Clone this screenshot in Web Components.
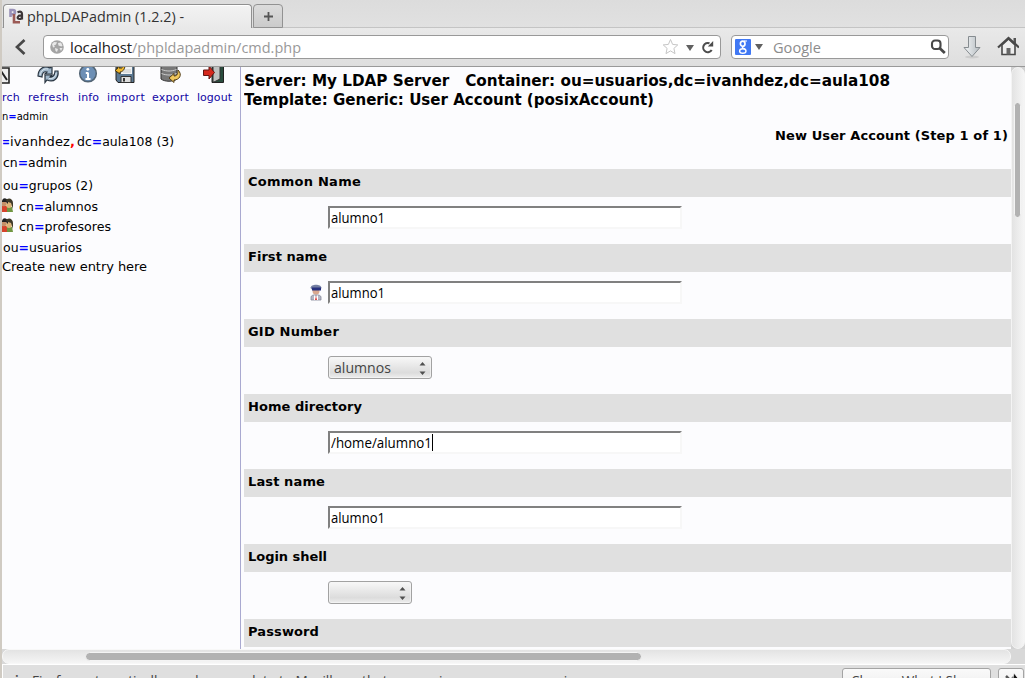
<!DOCTYPE html>
<html lang="en"><head><meta charset="utf-8"><title>phpLDAPadmin (1.2.2) -</title>
<style>html,body{margin:0;height:100%;overflow:hidden;background:#dfdfdf}</style></head>
<body><browser-window></browser-window>
<script>
const define=(name,html,init)=>customElements.define(name,class extends HTMLElement{
  connectedCallback(){
    if(this.shadowRoot)return;
    const t=document.createElement('template');
    t.innerHTML=typeof html==='function'?html(this):html;
    this.attachShadow({mode:'open'}).append(t.content.cloneNode(true));
    if(init)init(this);
  }
});

// Text that fills an exact width: condensed when too wide (or when "stretch" is set), tracked otherwise
define('fit-text','<style>:host{display:inline-block;white-space:pre;flex:none}span{display:inline-block;transform-origin:0 50%}</style><span><slot></slot></span>',el=>{
  const s=el.shadowRoot.querySelector('span'),w=+el.getAttribute('w'),n=s.getBoundingClientRect().width;
  el.style.width=w+'px';
  if(n>w*1.015||el.hasAttribute('stretch'))s.style.transform=`scaleX(${w/n})`;
  else s.style.letterSpacing=(w-n)/el.textContent.length+'px';
});

define('tab-strip',`<style>
:host{display:flex;height:28px;box-sizing:border-box;padding:4px 0 0 1px;background:linear-gradient(#dcdcdc,#e1e1e1);box-shadow:inset 0 -1px #c4c4c4}
.tab{display:flex;align-items:center;width:249px;height:24px;box-sizing:border-box;border:1px solid #909090;border-bottom:0;border-radius:4px 4px 0 0;background:linear-gradient(#f3f3f3,#e9e9e9);padding:0 0 1px 5px;box-shadow:inset 0 1px #fff;font:15px "Open Sans",sans-serif;color:#333}
.tab svg{margin-right:3px}
.new{width:30px;height:24px;margin-left:1px;box-sizing:border-box;border:1px solid #929292;border-radius:4px 4px 0 0;background:linear-gradient(#dcdcdc,#cbcbcb);display:flex;justify-content:center;padding-top:7px}
.new svg{display:block}
</style>
<div class="tab"><svg width="15" height="16" viewBox="0 0 15 16" fill="none" stroke-width="2.2">
<path d="M1.500 9V2h2.300c3 0 3 4.200 0 4.200H2" stroke="#9a92b8" stroke-width="2.600"/><path d="M5 6v8.200h6" stroke="#9b5a55" stroke-width="2.600"/><path d="M8.500 4.200c4-1.500 4.500.3 4.500 2.300v5M13 7.500c-5-.5-5.500 3.500-2.500 3.500 1.500 0 2.500-1 2.500-2" stroke="#3c3638"/></svg>
<fit-text w="157">phpLDAPadmin (1.2.2) -</fit-text></div>
<div class="new"><svg width="9" height="9" viewBox="0 0 9 9"><path d="M4.500 0v9M0 4.500h9" stroke="#555" stroke-width="1.800"/></svg></div>`);

define('nav-bar',`<style>
:host{display:flex;align-items:center;height:39px;box-sizing:border-box;padding:0 6px 1px 12px;border-bottom:1px solid #999;background:linear-gradient(#e9e9e9,#dedede);font:15px "Open Sans",sans-serif}
svg{display:block;flex:none}
.field{display:flex;align-items:center;box-sizing:border-box;height:24px;border:1px solid #999;border-radius:4px;background:#fff}
.url{width:678px;margin-left:17px;padding:0 6px}
.search{width:218px;margin-left:10px;padding:0 3px;color:#8c8c8c}
.host{color:#222;margin-left:6px}.path{color:#999}
.grow{flex:1}
</style>
<svg width="12" height="18" viewBox="0 0 12 18"><path d="M10.500 2 3 9l7.500 7" fill="none" stroke="#484848" stroke-width="2.700"/></svg>
<div class="field url">
<svg width="14" height="14" viewBox="0 0 14 14"><circle cx="7" cy="7" r="6.800" fill="#a4a4a4"/><path d="M2 4l2-2 3 .3-1 2.200-2 1 1 1.500-2 .5zM8 3l3-.5 1.500 3-1 1-3-1zM5 8l3 1-1 3-1.500-1zM9.500 8l3 0-1.500 3z" fill="#e8e8e8"/></svg>
<fit-text class="host" w="62">localhost</fit-text><fit-text class="path" w="169">/phpldapadmin/cmd.php</fit-text>
<span class="grow"></span>
<svg width="17" height="17" viewBox="0 0 17 17"><path d="M8.500 1.500l2.100 4.900 5.200.5-3.900 3.500 1.100 5.200-4.500-2.700L4 15.600l1.100-5.200L1.200 6.900l5.200-.5z" fill="#fff" stroke="#c6c6c6"/></svg>
<svg width="8" height="6" viewBox="0 0 8 6" style="margin:2px 7px 0 7px"><path d="M0 0h8L4 6z" fill="#606060"/></svg>
<svg width="13" height="14" viewBox="0 0 13 14"><path d="M8.500 3.300A4.600 4.600 0 1 0 10.700 10" fill="none" stroke="#4c4c4c" stroke-width="2.100"/><path d="M6.800 6.500h5.400V1z" fill="#4c4c4c"/></svg>
</div>
<div class="field search">
<svg width="16" height="16" viewBox="0 0 16 16"><rect width="16" height="16" rx="1" fill="#4078f4"/><g fill="none" stroke="#fff"><ellipse cx="7.700" cy="4.700" rx="2.300" ry="2.600" stroke-width="1.700"/><ellipse cx="7.800" cy="12" rx="3.200" ry="2.300" stroke-width="1.400"/><path d="M9 2h3M8 7.500c-2 1.500 1 1.500 2 2.500" stroke-width="1.200"/></g></svg>
<svg width="8" height="6" viewBox="0 0 8 6" style="margin:1px 10px 0 4px"><path d="M0 0h8L4 6z" fill="#606060"/></svg>
<fit-text w="48">Google</fit-text><span class="grow"></span>
<svg width="16" height="16" viewBox="0 0 16 16" style="margin-right:-1px"><rect x="2" y="1.500" width="8.500" height="8.500" rx="3" fill="none" stroke="#484848" stroke-width="2.100"/><path d="M9.500 9l5.300 5" stroke="#484848" stroke-width="2.800"/></svg>
</div>
<svg width="20" height="24" viewBox="0 0 20 24" style="margin-left:13px"><defs><linearGradient id="g" x2="1"><stop stop-color="#f5f7f8"/><stop offset="1" stop-color="#b4bbc0"/></linearGradient></defs><ellipse cx="10" cy="22" rx="7" ry="1.500" fill="#ccc"/><path d="M6.500 1.500h7v11h4.500L10 21.500 2 12.500h4.500z" fill="url(#g)" stroke="#868c90"/></svg>
<span class="grow"></span>
<svg width="22" height="22" viewBox="0 0 22 22" style="margin-top:-1px"><path d="M16.500 3h2.500v5h-2.500z" fill="#555"/><path d="M5 10v9.500h13V10L11.500 4z" fill="#ededed" stroke="#484848" stroke-width="1.600"/><path d="M1 12.500 11.500 3 22 12.500" fill="none" stroke="#484848" stroke-width="2.200"/><path d="M9.500 13h4v6.500h-4z" fill="#666"/></svg>`);

const art={
search:'<path d="M-8 1H9v15H-8z" fill="#eee" stroke="#222" stroke-width="1.600"/><path d="M1 4l6 9M1 5v5" stroke="#222" stroke-width="2"/>',
refresh:'<path d="M0 9C0 2 6-2 12 1l2-2v8H7l2-2C6 4 4 6 4 10z" fill="#9fb6ca" stroke="#283440" stroke-width="1.200"/><path d="M20 4c1 7-4 12-11 9l-2 2.500V8h7l-2 2c3 .5 5-2 5-6z" fill="#9fb6ca" stroke="#283440" stroke-width="1.200"/><path d="M2 8C3 4 6 1 10 2M18 6c0 4-3 6-7 5.500" fill="none" stroke="#dbe6ee"/>',
info:'<circle cx="10" cy="6.500" r="8.300" fill="#6d8fb5" stroke="#526474" stroke-width="1.500"/><path d="M10 5.500V12M7.800 6H10M7.500 12h5" stroke="#fff" stroke-width="2"/><circle cx="9.800" cy="2.300" r="1.400" fill="#fff"/>',
import:'<path d="M1-2h18v17.500H3l-2-2.500z" fill="#5b7892" stroke="#222"/><path d="M6-2h11v9H6z" fill="#f2f3f3"/><path d="M8 3h8M8 5h8" stroke="#b5b5b5" stroke-width=".7"/><path d="M6 9.500h10v6H6z" fill="#ddd" stroke="#333"/><path d="M9 11v3.500" stroke="#333" stroke-width="2"/><path d="M0-2h4v3h3v-3h3c0 5-3 7-5 7v2L0 3.500 3 1z" fill="#eeb62d" stroke="#433512"/>',
export:'<path d="M1-2h16v14c-4 3-12 3-16 0z" fill="#777" stroke="#333"/><path d="M1.500 2.500c5 2 10 2 15 0M1.500 6.500c5 2 10 2 15 0" fill="none" stroke="#ccc" stroke-width="1"/><path d="M18 3c5 5 1 10-4 10v2.500L9 11l5-4.500V9c3 0 4-2 4-6z" fill="#f0c75c" stroke="#543f19"/>',
logout:'<path d="M8-2h11.500v17.500H8z" fill="#294c3d" stroke="#222"/><path d="M9-2h7v14l-6 3H9z" fill="#bfc1c0" stroke="#333"/><path d="M-.5 3H5V-1l5.500 6.500L5 12V8.500H-.5z" fill="#d5281d" stroke="#621613"/>'};
define('tool-item',el=>`<style>:host{display:flex;flex-direction:column;align-items:center;flex:none;color:#1206a4;font:11px/14px "DejaVu Sans",sans-serif;width:${el.getAttribute('w')}px}svg{display:block;flex:none;margin-bottom:8px;overflow:visible}</style>
<svg width="22" height="16" viewBox="0 0 22 16">${art[el.getAttribute('icon')]}</svg><fit-text w="${el.getAttribute('w')}">${el.textContent}</fit-text>`);

define('group-icon',`<style>:host{display:block;width:17px;height:14px;flex:none}svg{display:block;margin-top:-1px}</style><svg width="12" height="14" viewBox="0 0 12 14"><path d="M0 8h6v6H0z" fill="#d4432c"/><path d="M5 9h5l1 5H5z" fill="#719642"/><circle cx="2" cy="5.500" r="2.800" fill="#c49068"/><circle cx="7" cy="7" r="2.900" fill="#dcb478"/><path d="M0 3c1-4 5-3 6 0v3l-2-2H0z" fill="#222"/><path d="M4 3c1-4 7-3 7 2v6l-2-6-3-1z" fill="#3f3a28"/></svg>`);

define('ldap-tree',`<style>
:host{display:block;width:238px;flex:none;overflow:hidden;border-right:1px solid #a9a9d0;font:13px "DejaVu Sans",sans-serif;color:#000}
.tools{display:flex;gap:8px;height:38px}
.tools :nth-child(3),.tools :nth-child(4){position:relative;left:1px}
.who{font-size:11px;line-height:16px;height:16px;padding-top:4px;margin-bottom:6px}
.rows{display:grid;grid-template-rows:20px 23px 22px 20px 20px 22px 17px}
.rows>div{display:flex;align-items:center;padding-left:1px}.rows>.flush{padding-left:0}
b{color:#00f;font-weight:bold}i{color:#f00;font-style:normal;font-weight:bold}
</style>
<div class="tools"><tool-item icon="search" w="18">rch</tool-item><tool-item icon="refresh" w="41">refresh</tool-item><tool-item icon="info" w="21">info</tool-item><tool-item icon="import" w="38">import</tool-item><tool-item icon="export" w="37">export</tool-item><tool-item icon="logout" w="35">logout</tool-item></div>
<div class="who"><fit-text w="46">n<b>=</b>admin</fit-text></div>
<div class="rows">
<div class="flush"><fit-text w="8"><b>=</b></fit-text><fit-text w="60">ivanhdez</fit-text><fit-text w="7"><i>,</i></fit-text><fit-text w="97">dc<b>=</b>aula108 (3)</fit-text></div>
<div><fit-text w="64">cn<b>=</b>admin</fit-text></div>
<div><fit-text w="90">ou<b>=</b>grupos (2)</fit-text></div>
<div class="flush"><group-icon></group-icon><fit-text w="79">cn<b>=</b>alumnos</fit-text></div>
<div class="flush"><group-icon></group-icon><fit-text w="92">cn<b>=</b>profesores</fit-text></div>
<div><fit-text w="79">ou<b>=</b>usuarios</fit-text></div>
<div class="flush"><fit-text w="145">Create new entry here</fit-text></div>
</div>`);

define('form-field',el=>`<style>
:host{display:block;height:75px;flex:none}
.head{height:28px;box-sizing:border-box;background:#e0e0e0;padding-left:4px;font:bold 13px/25px "DejaVu Sans",sans-serif}
.body{display:grid;grid-template-columns:84px 1fr;padding-top:9px}
.icon{display:flex;justify-content:flex-end;padding:3px 6px 0 0}
</style><div class="head"><fit-text w="${el.getAttribute('w')}">${el.getAttribute('label')}</fit-text></div>
<div class="body"><div class="icon"><slot name="icon"></slot></div><slot></slot></div>`);

define('text-field',`<style>
:host{display:flex;align-items:center;width:354px;height:23px;box-sizing:border-box;border:2px solid;border-color:#808080 #f7f7f7 #f7f7f7 #808080;background:#fff;padding-left:1px;font:15px/19px "Open Sans",sans-serif;color:#000}
:host([caret])::after{content:"";width:1px;height:17px;background:#000}
</style><slot></slot>`);

define('select-box',`<style>
:host{display:flex;align-items:center;justify-content:space-between;height:23px;box-sizing:border-box;border:1px solid #a2a2a2;border-radius:3px;background:linear-gradient(#f8f8f8,#e9e9e9 40%,#dcdcdc 75%,#eee);padding:0 5px;font:15px/19px "Open Sans",sans-serif;color:#444;box-shadow:inset 0 0 0 1px #f6f6f6aa}
svg{margin-top:2px}
</style><span><slot></slot></span><svg width="7" height="13" viewBox="0 0 7 13"><path d="M.5 3.500 3.500 0l3 3.500zM.5 9.500l3 3.500 3-3.500z" fill="#505050"/></svg>`);

define('person-icon',`<style>:host,svg{display:block}</style><svg width="12" height="17" viewBox="0 0 12 17"><path d="M1 16v-3c0-3 10-3 10 0v3z" fill="#b4b7c6" stroke="#858899" stroke-width=".8"/><path d="M4 11l2 2 2-2 0 5H4z" fill="#fff"/><path d="M6 12l1 4H5z" fill="#d93636"/><circle cx="6" cy="7" r="3.500" fill="#d9a890"/><path d="M.5 4c0-4.500 11-4.500 11 0l-1 1.500H2z" fill="#747fa2"/><path d="M2 3.500h9v3H2z" fill="#27317f"/></svg>`);

define('entry-form',`<style>
:host{display:flex;flex-direction:column;flex:1;min-width:0;overflow:hidden;padding:4px 0 0 3px;color:#000}
h1{margin:0;font:bold 16px/19px "DejaVu Sans",sans-serif;height:19px;white-space:nowrap}
.step{font:bold 13px/20px "DejaVu Sans",sans-serif;text-align:right;padding:17px 3px 23px 0;height:20px}
select-box.a{width:104px}select-box.b{width:84px}
</style>
<h1><fit-text stretch w="646">Server: My LDAP Server &nbsp; Container: ou=usuarios,dc=ivanhdez,dc=aula108</fit-text></h1>
<h1><fit-text stretch w="410">Template: Generic: User Account (posixAccount)</fit-text></h1>
<div class="step"><fit-text w="233">New User Account (Step 1 of 1)</fit-text></div>
<form-field label="Common Name" w="113"><text-field><fit-text w="54">alumno1</fit-text></text-field></form-field>
<form-field label="First name" w="79"><person-icon slot="icon"></person-icon><text-field><fit-text w="54">alumno1</fit-text></text-field></form-field>
<form-field label="GID Number" w="91"><select-box class="a"><fit-text w="57">alumnos</fit-text></select-box></form-field>
<form-field label="Home directory" w="114"><text-field caret><fit-text w="101">/home/alumno1</fit-text></text-field></form-field>
<form-field label="Last name" w="77"><text-field><fit-text w="54">alumno1</fit-text></text-field></form-field>
<form-field label="Login shell" w="79"><select-box class="b"></select-box></form-field>
<form-field label="Password" w="71"></form-field>`);

define('v-scroll',`<style>:host{display:block;width:14px;flex:none;background:#d2d2d2}.track{height:100%;box-sizing:border-box;border-radius:7px;border:1px solid #f4f4f4;background:linear-gradient(90deg,#e3e3e3,#f5f5f5);padding:34px 3px 0 2px}.thumb{height:116px;border-radius:4px;background:#b2b2b2;border:1px solid #f4f4f4;box-sizing:border-box}</style><div class="track"><div class="thumb"></div></div>`);
define('h-scroll',`<style>:host{display:block;height:15px;flex:none;padding-right:14px;background:#d8d8d8}.track{height:15px;box-sizing:border-box;border-radius:7px;border:1px solid #f8f8f8;background:linear-gradient(#e3e3e3,#f5f5f5);padding:2px 0 0 82px}.thumb{height:9px;width:557px;border-radius:5px;background:#b2b2b2;border:1px solid #f4f4f4;box-sizing:border-box}</style><div class="track"><div class="thumb"></div></div>`);

define('notice-bar',`<style>
:host{display:flex;flex:1;min-height:0;overflow:hidden;border-top:1px solid #fff;border-left:1px solid #fff;background:#dfdfdf;font:15px/20px "Open Sans",sans-serif;color:#444;padding-left:12px;box-sizing:border-box}
.i{padding-top:6px;width:17px;flex:none;font-weight:bold;font-size:12px;line-height:20px}.msg{padding-top:5px;flex:1}
.btn{box-sizing:border-box;height:28px;margin-top:3px;border:1px solid #a4a4a4;border-radius:3px;background:linear-gradient(#fafafa,#e9e9e9);padding:1px 0 0 8px;flex:none}
.c{width:149px}.x{width:26px;margin:3px 1px 0 7px;padding:4px 0 0 6px}
svg{display:block}
</style><span class="i">i</span><span class="msg"><fit-text w="569">Firefox automatically sends some data to Mozilla so that we can improve your experience.</fit-text></span>
<span class="btn c"><fit-text w="131">Choose What I Share</fit-text></span><span class="btn x"><svg width="16" height="16" viewBox="0 0 16 16"><path d="M1 3l9 9M10 3l-9 9" stroke="#555" stroke-width="2.500"/><path d="M9 0l6 8h-3l2 5-2 1-2-5-3 2z" fill="#111" stroke="#fff" stroke-width=".7"/></svg></span>`);

define('browser-window',`<style>
:host{display:flex;flex-direction:column;height:678px;width:1025px;box-sizing:border-box;overflow:hidden;border-left:2px solid #d0cbc3}
.page{display:flex;height:582px;flex:none;background:#fcfcfe}
tab-strip,nav-bar{flex:none}
</style><tab-strip></tab-strip><nav-bar></nav-bar><div class="page"><ldap-tree></ldap-tree><entry-form></entry-form><v-scroll></v-scroll></div><h-scroll></h-scroll><notice-bar></notice-bar>`);
</script></body></html>
